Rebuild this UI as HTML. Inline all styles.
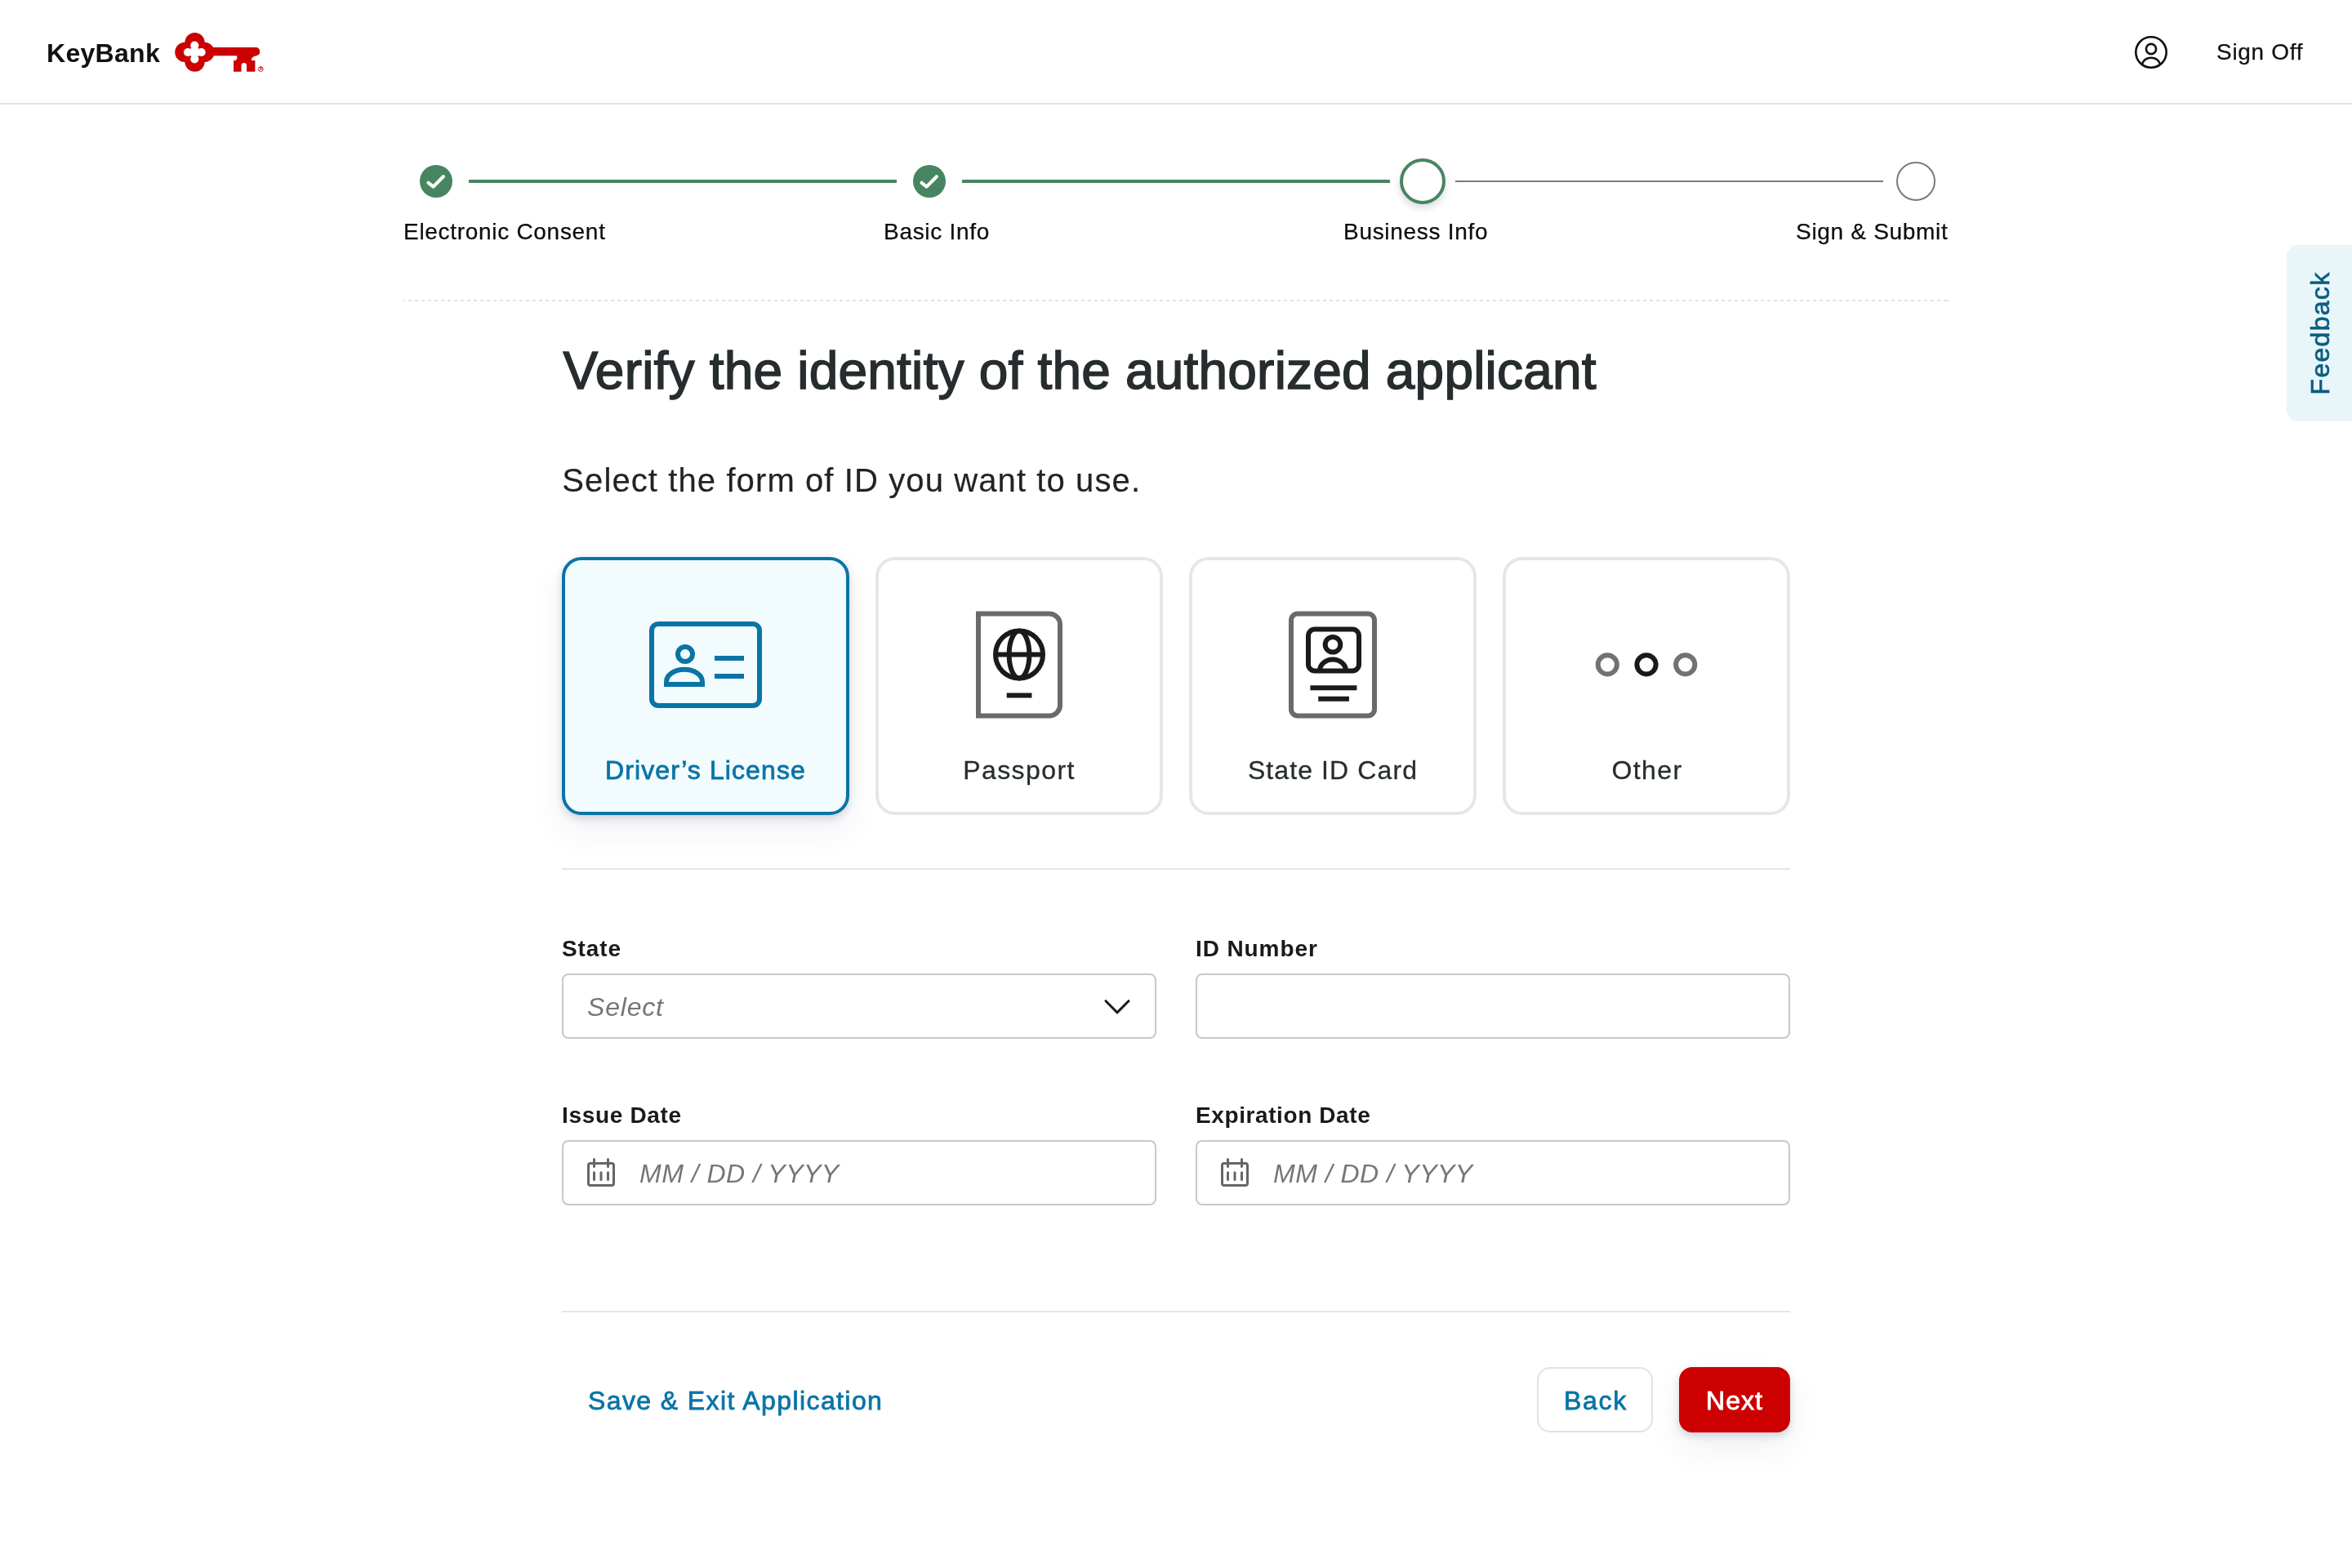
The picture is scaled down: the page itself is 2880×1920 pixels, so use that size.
<!DOCTYPE html>
<html lang="en">
<head>
<meta charset="utf-8">
<title>KeyBank - Verify identity</title>
<style>
html,body{margin:0;padding:0;background:#fff;}
body{width:2880px;height:1920px;position:relative;overflow:hidden;will-change:transform;font-family:"Liberation Sans",sans-serif;color:#1a1a1a;}
.abs{position:absolute;}
.t{position:absolute;white-space:nowrap;line-height:1;}
svg{position:absolute;overflow:visible;}
/* header */
#hdrline{left:0;top:126px;width:2880px;height:2px;background:#e3e3e3;}
#brand{left:57px;top:49px;font-size:32px;font-weight:bold;color:#111;letter-spacing:.3px;}
#signoff{left:2714px;top:50px;font-size:28px;color:#111;letter-spacing:.7px;-webkit-text-stroke:.25px #111;}
/* stepper */
.slabel{font-size:28px;color:#0d0d0d;top:270px;letter-spacing:.7px;-webkit-text-stroke:.25px #0d0d0d;}
.gline{height:4px;top:220px;background:#468560;}
#dotline{left:494px;top:367px;width:1892px;height:2px;background:repeating-linear-gradient(90deg,#e2e2e2 0,#e2e2e2 4px,transparent 4px,transparent 8px);background-position:-2px 0;}
/* headings */
#title{left:689.5px;top:422px;font-size:64px;letter-spacing:.2px;color:#272d2e;-webkit-text-stroke:1.5px #272d2e;}
#sub{left:688.3px;top:568px;font-size:40px;color:#1f2324;letter-spacing:1.1px;-webkit-text-stroke:.2px #1f2324;}
/* cards */
.card{position:absolute;top:682px;width:352px;height:316px;box-sizing:border-box;border:4px solid #e6e6e6;border-radius:24px;background:#fff;}
.card.sel{border-color:#0a74a6;background:#f2fbfd;box-shadow:0 4px 10px rgba(25,45,85,.17),0 18px 40px rgba(25,45,85,.07);}
.clabel{position:absolute;left:0;width:344px;text-align:center;top:241px;font-size:32px;line-height:1;color:#272d2e;white-space:nowrap;letter-spacing:1.2px;-webkit-text-stroke:.3px #272d2e;}
.hr{position:absolute;left:688px;width:1504px;height:2px;background:#e6e6e6;}
/* form */
.flabel{font-size:28px;font-weight:bold;color:#1a1a1a;}
.box{position:absolute;width:728px;height:80px;box-sizing:border-box;border:2px solid #c8c8c8;border-radius:8px;background:#fff;}
.ph{font-size:32px;font-style:italic;color:#767676;letter-spacing:.5px;}
/* buttons */
#save{left:720px;top:1699px;font-size:32px;color:#0a74a6;-webkit-text-stroke:.8px #0a74a6;letter-spacing:1.4px;}
#back{left:1882px;top:1674px;width:142px;height:80px;box-sizing:border-box;border:2px solid #e2e2e2;border-radius:16px;background:#fff;}
#next{left:2056px;top:1674px;width:136px;height:80px;border-radius:16px;background:#cc0000;box-shadow:0 4px 10px rgba(25,45,85,.17),0 18px 40px rgba(25,45,85,.07);}
.btxt{position:absolute;left:0;width:100%;text-align:center;top:23px;font-size:32px;line-height:1;white-space:nowrap;}
/* feedback */
#fb{left:2800px;top:300px;width:80px;height:216px;background:#e8f5f9;border-radius:14px 0 0 14px;}
#fbt{left:2800px;top:300px;width:80px;height:216px;}
</style>
</head>
<body>

<!-- HEADER -->
<div class="abs" id="hdrline"></div>
<div class="t" id="brand">KeyBank</div>
<svg id="keylogo" style="left:0;top:0" width="2880" height="128" viewBox="0 0 2880 128">
  <g fill="#cc0000">
    <circle cx="238.500" cy="52.200" r="12.200"/>
    <circle cx="238.500" cy="75.600" r="12.200"/>
    <circle cx="226.400" cy="63.900" r="12.200"/>
    <circle cx="250.300" cy="63.900" r="12.200"/>
    <rect x="226" y="52" width="24" height="24"/>
    <path d="M250,58 H312.800 A5.150,5.150 0 0 1 314,68.200 Q308.200,69 307.600,74 H312.400 V87.700 H302 V80.250 A3.250,3.250 0 0 0 295.500,80.250 V87.700 H286 V74 H288.600 Q291.600,71 289.600,68.300 H250 Z"/>
  </g>
  <g fill="#fff">
    <circle cx="238.300" cy="55.700" r="5.100"/>
    <circle cx="238.300" cy="72.300" r="5.100"/>
    <circle cx="230" cy="64" r="5.100"/>
    <circle cx="246.600" cy="64" r="5.100"/>
    <rect x="233.300" y="59" width="10" height="10"/>
  </g>
  <circle cx="319.300" cy="84.600" r="3" fill="none" stroke="#cc0000" stroke-width=".8"/>
  <text x="317.700" y="86.400" font-size="5" font-family="Liberation Sans, sans-serif" font-weight="bold" fill="#cc0000">R</text>
  <!-- user icon -->
  <g fill="none" stroke="#111" stroke-width="2.600">
    <circle cx="2634" cy="64" r="18.700"/>
    <circle cx="2634" cy="60" r="6.100"/>
    <path d="M2623,78.300 A11.800,11.800 0 0 1 2645,78.300"/>
  </g>
</svg>
<div class="t" id="signoff">Sign Off</div>

<!-- STEPPER -->
<svg style="left:0;top:180px" width="2880" height="90" viewBox="0 180 2880 90">
  <circle cx="534" cy="222" r="20" fill="#468560"/>
  <path d="M524.500,223.800 L530.600,228.600 L542.800,216.200" fill="none" stroke="#fff" stroke-width="4.200" stroke-linecap="round" stroke-linejoin="round"/>
  <circle cx="1138" cy="222" r="20" fill="#468560"/>
  <path d="M1128.500,223.800 L1134.600,228.600 L1146.800,216.200" fill="none" stroke="#fff" stroke-width="4.200" stroke-linecap="round" stroke-linejoin="round"/>
</svg>
<div class="abs gline" style="left:574px;width:524px;"></div>
<div class="abs gline" style="left:1178px;width:524px;"></div>
<div class="abs" style="left:1782px;top:221px;width:524px;height:2px;background:#7a7a7a;"></div>
<div class="abs" style="left:1714px;top:194px;width:56px;height:56px;box-sizing:border-box;border:4px solid #468560;border-radius:50%;background:#fff;box-shadow:0 5px 10px rgba(0,0,0,.14);"></div>
<div class="abs" style="left:2322px;top:198px;width:48px;height:48px;box-sizing:border-box;border:2px solid #7a7a7a;border-radius:50%;background:#fff;"></div>
<div class="t slabel" style="left:494px;">Electronic Consent</div>
<div class="t slabel" style="left:1082px;">Basic Info</div>
<div class="t slabel" style="left:1645px;">Business Info</div>
<div class="t slabel" style="left:2199px;">Sign &amp; Submit</div>
<div class="abs" id="dotline"></div>

<!-- HEADINGS -->
<div class="t" id="title">Verify the identity of the authorized applicant</div>
<div class="t" id="sub">Select the form of ID you want to use.</div>

<!-- CARDS -->
<div class="card sel" style="left:688px;"><div class="clabel" style="color:#0a74a6;-webkit-text-stroke:.8px #0a74a6;letter-spacing:1.1px;">Driver&rsquo;s License</div></div>
<div class="card" style="left:1072px;"><div class="clabel" style="letter-spacing:1.4px;">Passport</div></div>
<div class="card" style="left:1456px;"><div class="clabel" style="letter-spacing:1.1px;">State ID Card</div></div>
<div class="card" style="left:1840px;"><div class="clabel" style="letter-spacing:1.4px;left:1px;">Other</div></div>

<svg id="icons" style="left:0;top:740px" width="2880" height="150" viewBox="0 740 2880 150">
  <!-- driver's license -->
  <g fill="none" stroke="#0a74a6" stroke-width="6">
    <rect x="798" y="764" width="132" height="100" rx="8"/>
    <circle cx="839" cy="801" r="9"/>
    <path d="M816,838 V835 C816,826.500 825.500,819.800 838,819.800 C850.500,819.800 860,826.500 860,835 V838 Z" stroke-linejoin="miter"/>
    <path d="M875,806 H911 M875,828 H911"/>
  </g>
  <!-- passport -->
  <path d="M1198,751.500 H1285 A13,13 0 0 1 1298,764.500 V863.500 A13,13 0 0 1 1285,876.500 H1198 Z" fill="none" stroke="#6a6a6a" stroke-width="6"/>
  <g fill="none" stroke="#1a1a1a" stroke-width="6">
    <circle cx="1248" cy="801.500" r="29"/>
    <ellipse cx="1248" cy="801.500" rx="12.400" ry="29"/>
    <path d="M1219,801.500 H1277 M1232.700,851.500 H1263.400"/>
  </g>
  <!-- state id -->
  <rect x="1581" y="751.500" width="102" height="125" rx="8" fill="none" stroke="#6a6a6a" stroke-width="6"/>
  <g fill="none" stroke="#1a1a1a" stroke-width="6">
    <rect x="1602" y="770.500" width="62" height="51" rx="8"/>
    <circle cx="1632" cy="789.300" r="9.300"/>
    <path d="M1616,821.500 A16,14 0 0 1 1648,821.500"/>
    <path d="M1604.400,842.300 H1661.400 M1614.200,855.700 H1651.900"/>
  </g>
  <!-- other -->
  <g fill="none" stroke-width="6">
    <circle cx="1968.300" cy="813.800" r="11.600" stroke="#727272"/>
    <circle cx="2016" cy="813.800" r="11.600" stroke="#1a1a1a"/>
    <circle cx="2063.700" cy="813.800" r="11.600" stroke="#727272"/>
  </g>
</svg>

<div class="hr" style="top:1063px;"></div>

<!-- FORM -->
<div class="t flabel" style="left:688px;top:1148px;letter-spacing:.9px;">State</div>
<div class="t flabel" style="left:1464px;top:1148px;letter-spacing:.9px;">ID Number</div>
<div class="box" style="left:688px;top:1192px;"></div>
<div class="box" style="left:1464px;top:1192px;"></div>
<div class="t ph" style="left:719px;top:1217px;letter-spacing:.8px;">Select</div>
<svg style="left:1340px;top:1215px" width="60" height="40" viewBox="1340 1215 60 40">
  <path d="M1354,1225.700 L1368,1239.800 L1382,1225.700" fill="none" stroke="#1a1a1a" stroke-width="3" stroke-linecap="round" stroke-linejoin="miter"/>
</svg>

<div class="t flabel" style="left:688px;top:1352px;letter-spacing:.67px;">Issue Date</div>
<div class="t flabel" style="left:1464px;top:1352px;letter-spacing:.6px;">Expiration Date</div>
<div class="box" style="left:688px;top:1396px;"></div>
<div class="box" style="left:1464px;top:1396px;"></div>
<svg style="left:0;top:1410px" width="2880" height="50" viewBox="0 1410 2880 50">
  <g fill="none" stroke="#666" stroke-width="3" stroke-linecap="round">
    <rect x="720.500" y="1424.500" width="31" height="27" rx="2.500"/>
    <path d="M727.500,1419.500 V1428.500 M744.500,1419.500 V1428.500 M727.500,1435.700 V1444.500 M736,1435.700 V1444.500 M744.500,1435.700 V1444.500"/>
  </g>
  <g transform="translate(776,0)" fill="none" stroke="#666" stroke-width="3" stroke-linecap="round">
    <rect x="720.500" y="1424.500" width="31" height="27" rx="2.500"/>
    <path d="M727.500,1419.500 V1428.500 M744.500,1419.500 V1428.500 M727.500,1435.700 V1444.500 M736,1435.700 V1444.500 M744.500,1435.700 V1444.500"/>
  </g>
</svg>
<div class="t ph" style="left:783px;top:1421px;">MM / DD / YYYY</div>
<div class="t ph" style="left:1559px;top:1421px;">MM / DD / YYYY</div>

<div class="hr" style="top:1605px;"></div>

<!-- BUTTONS -->
<div class="t" id="save">Save &amp; Exit Application</div>
<div class="abs" id="back"><div class="btxt" style="top:22.6px;left:1px;color:#0a74a6;-webkit-text-stroke:.8px #0a74a6;letter-spacing:1.7px;">Back</div></div>
<div class="abs" id="next"><div class="btxt" style="top:24.6px;color:#fff;-webkit-text-stroke:.8px #fff;letter-spacing:1px;">Next</div></div>

<!-- FEEDBACK -->
<div class="abs" id="fb"></div>
<svg id="fbt" class="abs" width="80" height="216" viewBox="0 0 80 216">
  <text transform="translate(52,108) rotate(-90)" text-anchor="middle" font-family="Liberation Sans, sans-serif" font-size="32" fill="#0c5d80" stroke="#0c5d80" stroke-width=".7" letter-spacing="1.3">Feedback</text>
</svg>

</body>
</html>
